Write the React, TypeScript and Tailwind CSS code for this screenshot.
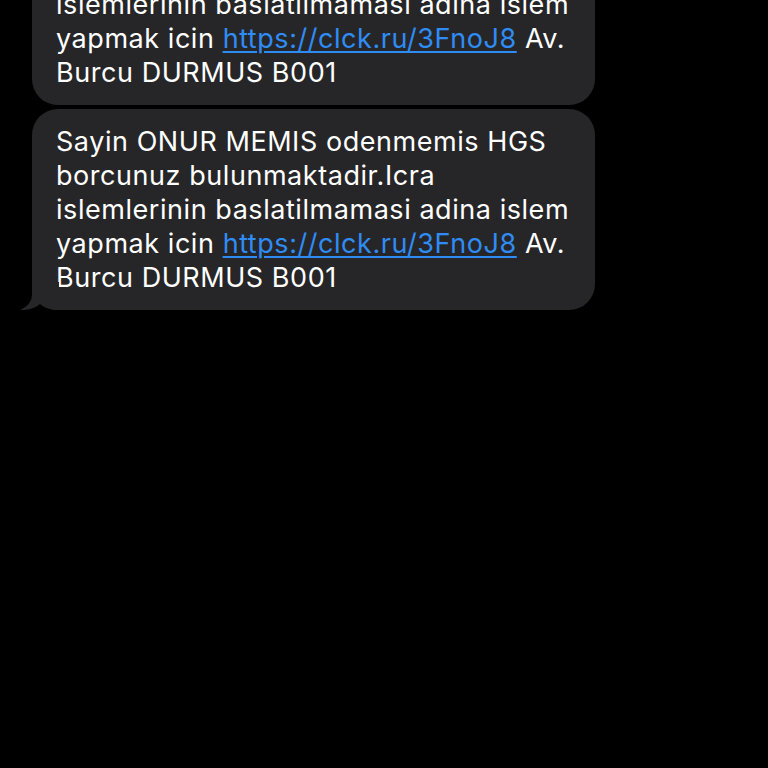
import React from "react";

const lines: React.ReactNode[] = [
  "Sayin ONUR MEMIS odenmemis HGS",
  "borcunuz bulunmaktadir.Icra",
  "islemlerinin baslatilmamasi adina islem",
  <>
    yapmak icin{" "}
    <a href="#" className="text-[#2f8cf5] underline underline-offset-[3px] decoration-[2px]">
      https://clck.ru/3FnoJ8
    </a>{" "}
    Av.
  </>,
  "Burcu DURMUS B001",
];

const Bubble: React.FC<{ tail?: boolean }> = ({ tail }) => (
  <div className="relative w-[563px]">
    <div className="rounded-[26px] bg-[#262628] px-6 pt-[16px] pb-[15px] text-[27px] leading-[34px] tracking-[0.55px] text-white">
      {lines.map((l, i) => (
        <div key={i} className="whitespace-nowrap">
          {l}
        </div>
      ))}
    </div>
    {tail && (
      <svg
        className="absolute -left-[13px] bottom-0"
        width="40"
        height="28"
        viewBox="0 0 40 28"
      >
        <path
          d="M13 0 L13 12 C13 20 8 25 1 28 C10 28 16 26 21 22 C26 26 32 28 40 28 L40 0 Z"
          fill="#262628"
        />
      </svg>
    )}
  </div>
);

export default function App() {
  return (
    <div
      className="h-[768px] w-[768px] overflow-hidden bg-black"
      style={{ fontFamily: 'Inter, "Liberation Sans", Arial, sans-serif' }}
    >
      <div className="-mt-[96px] flex flex-col gap-1 pl-8">
        <Bubble />
        <Bubble tail />
      </div>
    </div>
  );
}
